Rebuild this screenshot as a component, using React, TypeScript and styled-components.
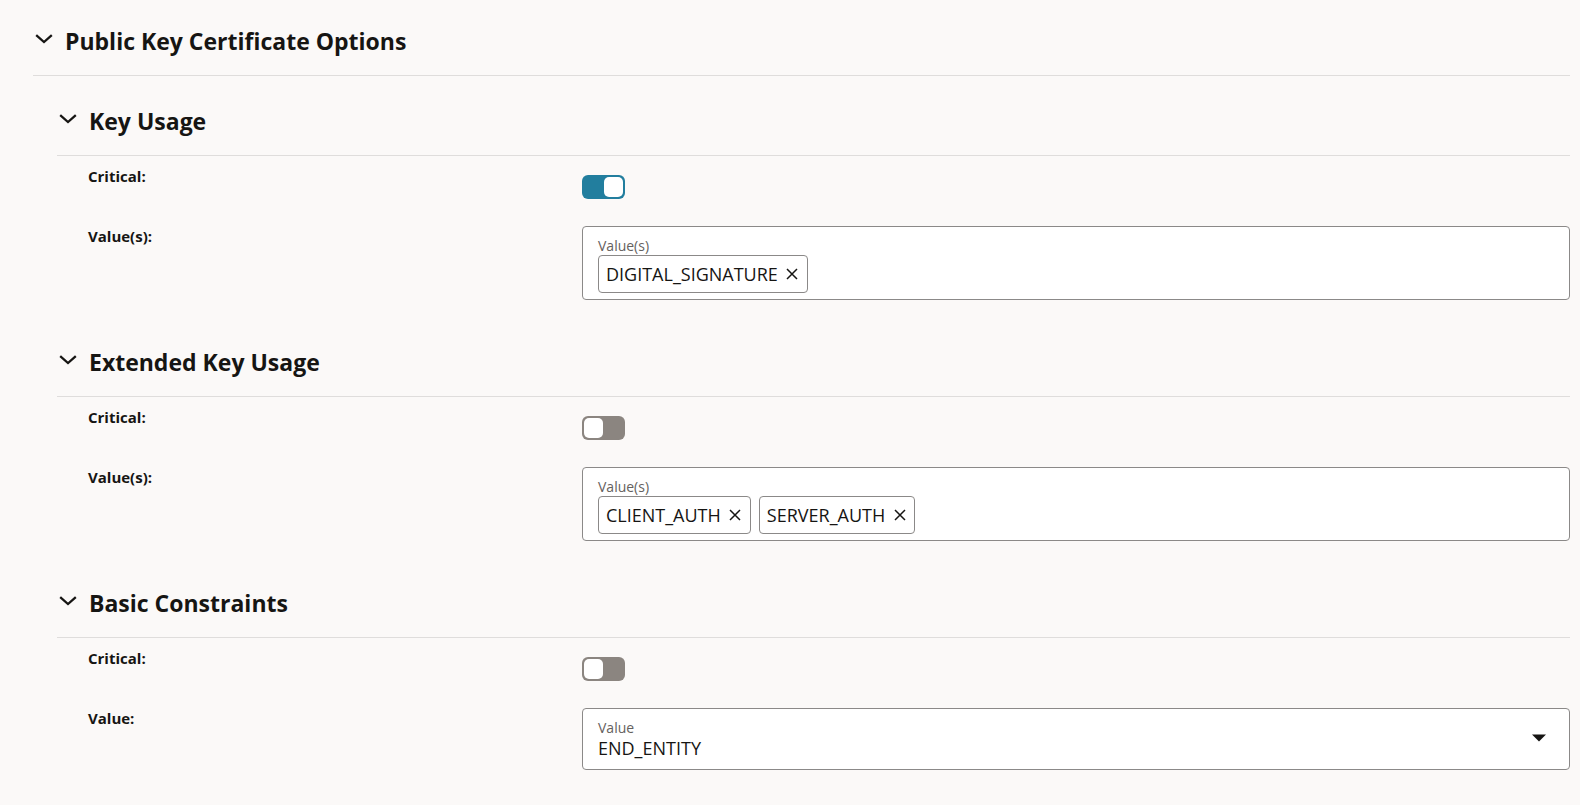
import React, { useId, useState } from "react";
import styled, { createGlobalStyle } from "styled-components";

const GlobalStyle = createGlobalStyle`
  *, *::before, *::after { box-sizing: border-box; }
  body {
    margin: 0;
    background: #fbf9f8;
    color: #161513;
    font-family: "Segoe UI", "Open Sans", "Noto Sans", sans-serif;
  }
`;

const Page = styled.main`
  padding: 16px 10px 16px 33px;
`;

const Section = styled.section<{ $nested?: boolean }>`
  margin-left: ${(p) => (p.$nested ? "24px" : "0")};
  padding-top: ${(p) => (p.$nested ? "20px" : "0")};
`;

const Header = styled.header`
  display: flex;
  align-items: flex-start;
  height: 60px;
  border-bottom: 1px solid #dfdddc;
`;

const Disclosure = styled.button`
  display: flex;
  align-items: center;
  justify-content: center;
  width: 22px;
  height: 46px;
  margin-right: 10px;
  padding: 0;
  border: 0;
  background: none;
  color: inherit;
  cursor: pointer;
`;

const Chevron = styled.svg<{ $open: boolean }>`
  transform: ${(p) => (p.$open ? "none" : "rotate(-90deg)")};
`;

const Title = styled.h2`
  margin: 0;
  font-size: 23px;
  font-weight: 660;
  line-height: 50px;
`;

const Fields = styled.div`
  padding: 0 0 17px 31px;
`;

const Row = styled.div`
  display: grid;
  grid-template-columns: 1fr 2fr;
  align-items: start;
  min-height: 60px;
  padding-top: 10px;
`;

const RowLabel = styled.label`
  font-size: 15px;
  font-weight: 700;
  line-height: 20px;
`;

const Switch = styled.input`
  appearance: none;
  display: flex;
  align-items: center;
  justify-content: flex-start;
  width: 43px;
  height: 24px;
  margin: 9px 0 0;
  padding: 2px;
  border-radius: 6px;
  background: #8b8580;
  cursor: pointer;

  &::before {
    content: "";
    width: 19px;
    height: 20px;
    border-radius: 5px;
    background: #ffffff;
  }

  &:checked {
    justify-content: flex-end;
    background: #227e9e;
  }
`;

const FieldBox = styled.div<{ $compact?: boolean }>`
  position: relative;
  padding: ${(p) => (p.$compact ? "9px 15px 10px" : "9px 15px 6px")};
  border: 1px solid #8b8988;
  border-radius: 4px;
  background: #ffffff;
`;

const Hint = styled.span`
  display: block;
  color: #65615e;
  font-size: 14px;
  line-height: 19px;
`;

const Chips = styled.ul`
  display: flex;
  flex-wrap: wrap;
  gap: 8px;
  margin: 0;
  padding: 0;
  list-style: none;
`;

const Chip = styled.li`
  display: flex;
  align-items: center;
  height: 38px;
  padding-left: 7px;
  border: 1px solid #8b8988;
  border-radius: 4px;
  font-size: 18px;
  line-height: 24px;
`;

const Remove = styled.button`
  display: flex;
  align-items: center;
  justify-content: center;
  width: 29px;
  height: 36px;
  padding: 0;
  border: 0;
  background: none;
  color: inherit;
  cursor: pointer;
`;

const Select = styled.select`
  appearance: none;
  display: block;
  width: 100%;
  height: 22px;
  padding: 0;
  border: 0;
  background: transparent;
  color: inherit;
  font-family: inherit;
  font-size: 18px;
  line-height: 22px;
`;

const Caret = styled.svg`
  position: absolute;
  right: 23px;
  top: 50%;
  margin-top: -5px;
  pointer-events: none;
`;

interface PanelProps {
  title: string;
  nested?: boolean;
  children: React.ReactNode;
}

function Panel({ title, nested, children }: PanelProps) {
  const [open, setOpen] = useState(true);
  return (
    <Section $nested={nested}>
      <Header>
        <Disclosure type="button" aria-label={title} aria-expanded={open} onClick={() => setOpen(!open)}>
          <Chevron $open={open} width="18" height="10" viewBox="0 0 18 10" aria-hidden="true">
            <path d="M1.2 1.2 9 8 16.8 1.2" fill="none" stroke="currentColor" strokeWidth="2.3" />
          </Chevron>
        </Disclosure>
        <Title as={nested ? "h3" : "h2"}>{title}</Title>
      </Header>
      {open && children}
    </Section>
  );
}

function CriticalRow({ initial = false }: { initial?: boolean }) {
  const id = useId();
  return (
    <Row>
      <RowLabel htmlFor={id}>Critical:</RowLabel>
      <Switch id={id} type="checkbox" role="switch" defaultChecked={initial} />
    </Row>
  );
}

function ChipsRow({ initial }: { initial: string[] }) {
  const id = useId();
  const [values, setValues] = useState(initial);
  return (
    <Row>
      <RowLabel as="span" id={id}>Value(s):</RowLabel>
      <FieldBox role="group" aria-labelledby={id}>
        <Hint>Value(s)</Hint>
        <Chips>
          {values.map((value) => (
            <Chip key={value}>
              {value}
              <Remove
                type="button"
                aria-label={`Remove ${value}`}
                onClick={() => setValues(values.filter((v) => v !== value))}
              >
                <svg width="12" height="12" viewBox="0 0 12 12" aria-hidden="true">
                  <path d="M1 1 11 11M11 1 1 11" fill="none" stroke="currentColor" strokeWidth="1.5" />
                </svg>
              </Remove>
            </Chip>
          ))}
        </Chips>
      </FieldBox>
    </Row>
  );
}

function SelectRow() {
  const id = useId();
  return (
    <Row>
      <RowLabel htmlFor={id}>Value:</RowLabel>
      <FieldBox $compact>
        <Hint>Value</Hint>
        <Select id={id} defaultValue="END_ENTITY">
          <option>END_ENTITY</option>
        </Select>
        <Caret width="14" height="8" viewBox="0 0 14 8" aria-hidden="true">
          <path d="M0 .5H14L7 7.5Z" fill="currentColor" />
        </Caret>
      </FieldBox>
    </Row>
  );
}

export default function App() {
  return (
    <>
      <GlobalStyle />
      <Page>
        <Panel title="Public Key Certificate Options">
          <Panel title="Key Usage" nested>
            <Fields>
              <CriticalRow initial />
              <ChipsRow initial={["DIGITAL_SIGNATURE"]} />
            </Fields>
          </Panel>
          <Panel title="Extended Key Usage" nested>
            <Fields>
              <CriticalRow />
              <ChipsRow initial={["CLIENT_AUTH", "SERVER_AUTH"]} />
            </Fields>
          </Panel>
          <Panel title="Basic Constraints" nested>
            <Fields>
              <CriticalRow />
              <SelectRow />
            </Fields>
          </Panel>
        </Panel>
      </Page>
    </>
  );
}
